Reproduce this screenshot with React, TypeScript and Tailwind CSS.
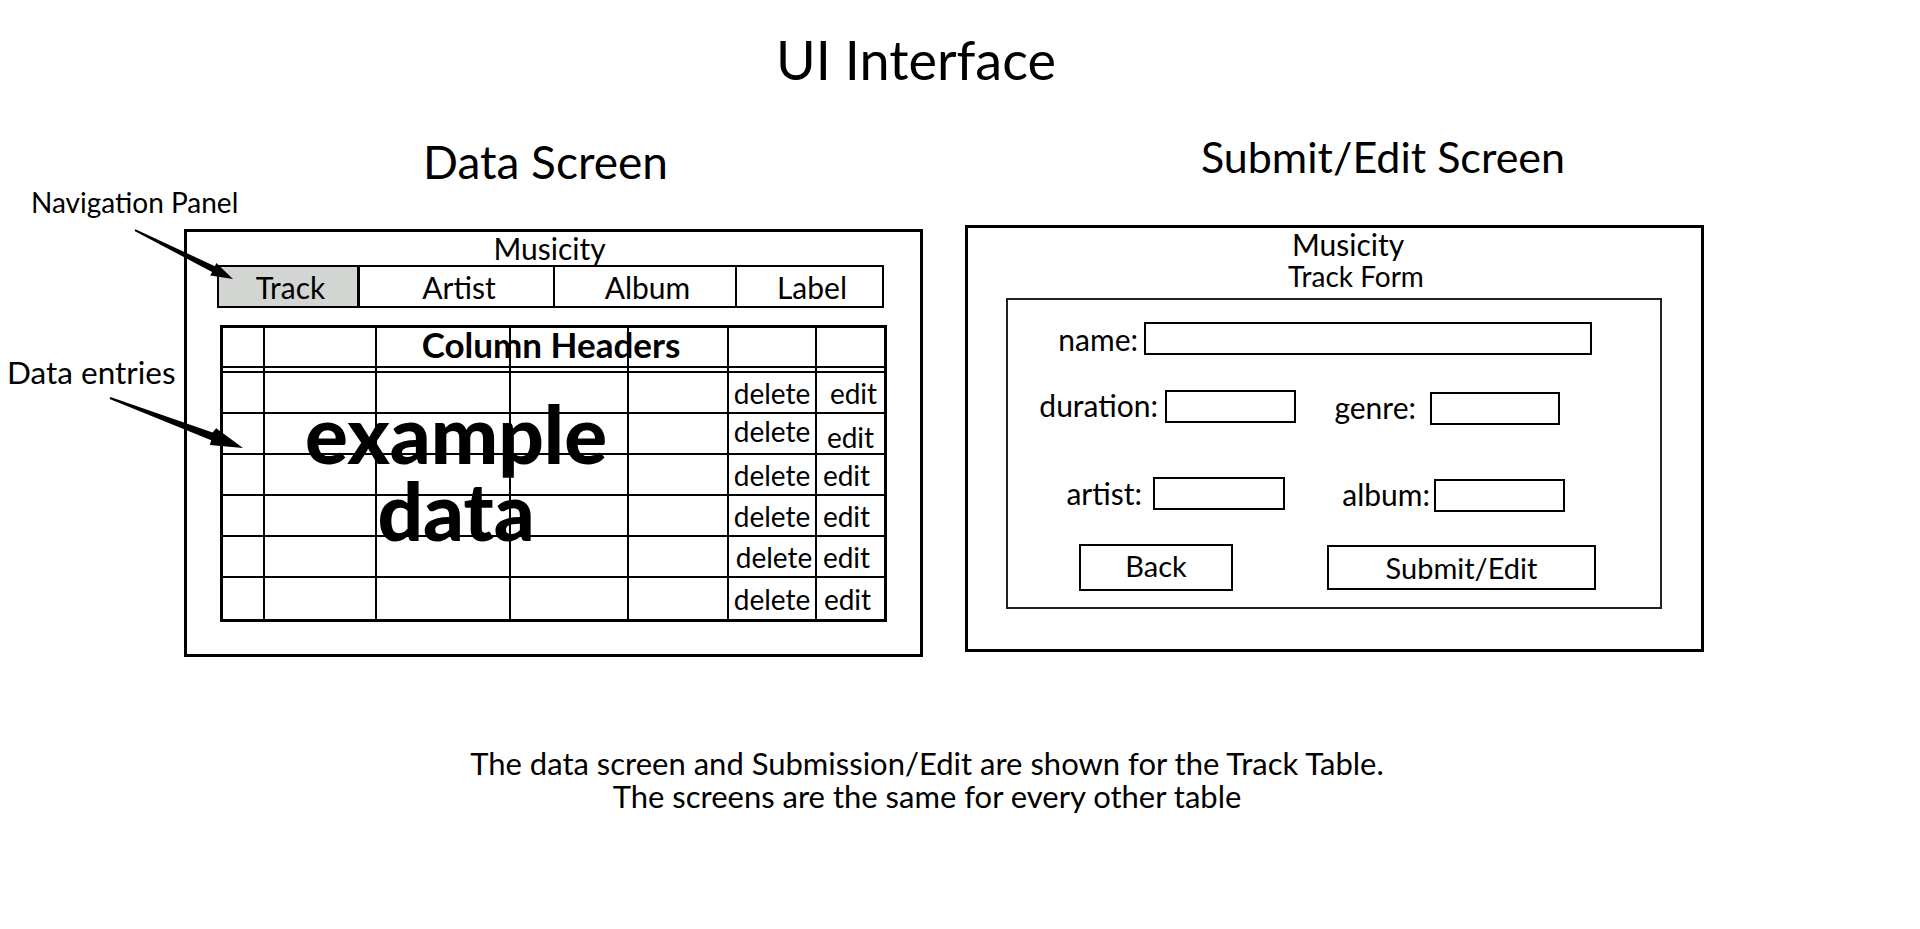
const cols = ["w-[42px]", "w-[112px]", "w-[134px]", "w-[118px]", "w-[100px]", "w-[88px]", "w-[67px]"];

const rows = [
  { del: "pt-[1px]", edit: "pl-[6px]" },
  { del: "pb-[6px]", edit: "pt-[6px]" },
  { del: "", edit: "pr-[8px]" },
  { del: "", edit: "pr-[8px]" },
  { del: "pl-[4px]", edit: "pr-[8px]" },
  { del: "", edit: "pr-[6px]" },
];

function Cell({ i, children, extra = "" }: { i: number; children?: React.ReactNode; extra?: string }) {
  return (
    <div
      className={`${cols[i]} h-full shrink-0 box-border ${i < 6 ? "border-r-2 border-black" : ""} flex items-center justify-center ${extra}`}
    >
      {children}
    </div>
  );
}

function DataTable() {
  return (
    <div className="relative ml-[33px] mt-[17px] w-[667px] border-[3px] border-black">
      {/* header row + double rule */}
      <div className="flex h-[40px] border-b-2 border-black">
        {cols.map((_, i) => (
          <Cell key={i} i={i} />
        ))}
      </div>
      <div className="flex h-[5px] border-b-2 border-black">
        {cols.map((_, i) => (
          <Cell key={i} i={i} />
        ))}
      </div>
      {rows.map((r, idx) => (
        <div key={idx} className={`flex h-[41px] ${idx < rows.length - 1 ? "border-b-2 border-black" : ""}`}>
          {cols.map((_, i) => (
            <Cell key={i} i={i} extra={i === 5 ? r.del : i === 6 ? r.edit : ""}>
              {i === 5 && <span className="text-[28px] leading-none">delete</span>}
              {i === 6 && <span className="text-[28px] leading-none">edit</span>}
            </Cell>
          ))}
        </div>
      ))}

      <div className="absolute left-0 right-[5px] top-[-1px] text-center text-[35px] font-bold leading-none">
        Column Headers
      </div>
      <div className="absolute left-0 top-[67px] w-[466px] text-center text-[80px] font-black leading-[77px]">
        example
        <br />
        data
      </div>
    </div>
  );
}

function DataPanel() {
  const tabs = [
    { label: "Track", cls: "w-[141px] bg-[#d3d5d3] border-r-[3px]" },
    { label: "Artist", cls: "w-[195px] border-r-2" },
    { label: "Album", cls: "w-[182px] border-r-2" },
    { label: "Label", cls: "flex-1" },
  ];
  return (
    <div className="mt-[44px] h-[428px] w-[739px] border-[3px] border-black">
      <div className="pt-[1px] pr-[8px] text-center text-[30px] leading-none">Musicity</div>
      <div className="ml-[30px] mt-[2px] flex h-[43px] w-[667px] border-2 border-black">
        {tabs.map((t) => (
          <div key={t.label} className={`${t.cls} box-border flex items-center justify-center border-black pl-[5px] text-[30px] leading-none`}>
            {t.label}
          </div>
        ))}
      </div>
      <DataTable />
    </div>
  );
}

function Input({ w, extra = "" }: { w: string; extra?: string }) {
  return <div className={`${w} h-[33px] shrink-0 border-2 border-black ${extra}`} />;
}

function Label({ w, text, extra = "" }: { w: string; text: string; extra?: string }) {
  return <div className={`${w} shrink-0 text-right text-[30px] leading-none ${extra}`}>{text}</div>;
}

function FormPanel() {
  return (
    <div className="mt-[47px] h-[427px] w-[739px] border-[3px] border-black">
      <div className="pt-[1px] pl-[27px] text-center text-[30px] leading-none">Musicity</div>
      <div className="mt-[3px] pl-[43px] text-center text-[28px] leading-none">Track Form</div>
      <div className="ml-[38px] mt-[8px] h-[311px] w-[656px] border-2 border-[#222]">
        <div className="mt-[22px] flex h-[33px] items-center">
          <Label w="w-[130px]" text="name:" />
          <Input w="ml-[6px] w-[448px]" />
        </div>
        <div className="mt-[35px] flex h-[35px] items-center">
          <Label w="w-[150px]" text="duration:" extra="mb-[6px]" />
          <Input w="ml-[7px] w-[131px]" extra="self-start" />
          <Label w="w-[120px]" text="genre:" extra="mb-[2px]" />
          <Input w="ml-[14px] w-[130px]" extra="self-end" />
        </div>
        <div className="mt-[52px] flex h-[35px] items-center">
          <Label w="w-[134px]" text="artist:" extra="mb-[4px]" />
          <Input w="ml-[11px] w-[132px]" extra="self-start" />
          <Label w="w-[145px]" text="album:" extra="mb-[2px]" />
          <Input w="ml-[4px] w-[131px]" extra="self-end" />
        </div>
        <div className="mt-[32px] flex items-start">
          <div className="ml-[71px] flex h-[47px] w-[154px] items-center justify-center border-2 border-black pb-[4px] text-[29px] leading-none">
            Back
          </div>
          <div className="ml-[94px] mt-[1px] flex h-[45px] w-[269px] items-center justify-center border-2 border-black text-[29px] leading-none">
            Submit/Edit
          </div>
        </div>
      </div>
    </div>
  );
}

function Arrows() {
  return (
    <svg className="pointer-events-none absolute left-0 top-0" width="1920" height="929" viewBox="0 0 1920 929">
      <polygon points="134.6,231 135.4,229.2 214.9,266.2 216.4,262.9 233,279 210.2,275.5 212.1,272" fill="#000" />
      <polygon points="109.6,399 110.4,397 212.6,432.5 216.2,428.3 243,448 209.8,445.1 211.2,440.2" fill="#000" />
    </svg>
  );
}

export default function App() {
  return (
    <div className="relative h-[929px] w-[1920px] overflow-hidden bg-white font-['Lato',sans-serif] text-black">
      <h1 className="w-[1832px] pt-[33px] text-center text-[54px] font-normal leading-none">UI Interface</h1>

      <div className="flex items-start pl-[184px]">
        <section className="mt-[52px] flex w-[739px] flex-col">
          <h2 className="pr-[16px] text-center text-[46px] font-normal leading-none">Data Screen</h2>
          <DataPanel />
        </section>
        <section className="ml-[42px] mt-[48px] flex w-[739px] flex-col">
          <h2 className="pl-[97px] text-center text-[43px] font-normal leading-none">Submit/Edit Screen</h2>
          <FormPanel />
        </section>
      </div>

      <div className="mt-[90px] w-[1854px] text-center text-[31px] leading-[33px]">
        <p>The data screen and Submission/Edit are shown for the Track Table.</p>
        <p>The screens are the same for every other table</p>
      </div>

      <div className="absolute left-[31px] top-[188px] text-[28px] leading-none">Navigation Panel</div>
      <div className="absolute left-[7px] top-[357px] text-[31.5px] leading-none">Data entries</div>
      <Arrows />
    </div>
  );
}
